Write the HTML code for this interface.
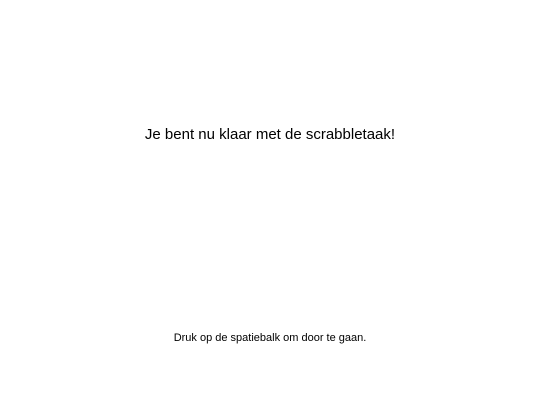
<!DOCTYPE html>
<html><head><meta charset="utf-8"><style>
html,body{margin:0;padding:0;background:#fff;width:540px;height:405px;overflow:hidden}
body{position:relative;font-family:"Liberation Sans",sans-serif;color:#000}
.t{position:absolute;left:0;width:540px;text-align:center;white-space:nowrap}
#a{top:126px;font-size:15px}
#b{top:332px;font-size:11px}
</style></head><body>
<div class="t" id="a">Je bent nu klaar met de scrabbletaak!</div>
<div class="t" id="b">Druk op de spatiebalk om door te gaan.</div>
</body></html>
